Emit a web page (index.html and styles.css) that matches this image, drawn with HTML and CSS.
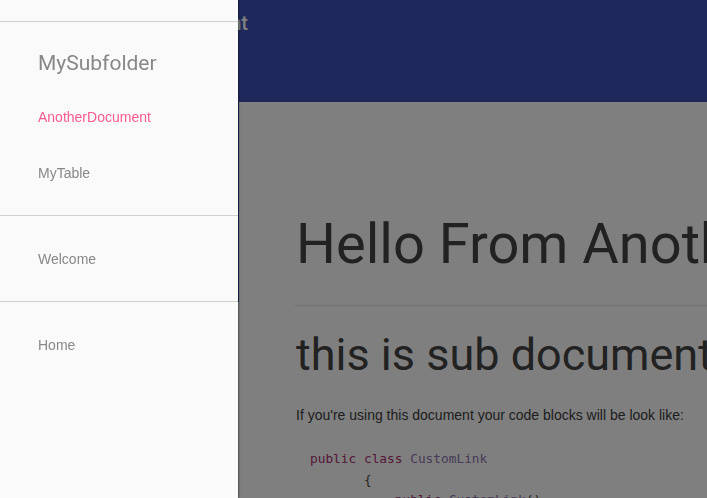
FILE: index.html
```html
<!DOCTYPE html>
<html>
<head>
<meta charset="utf-8">
<link rel="stylesheet" href="styles.css">
</head>
<body>
<div class="page">
  <header class="appbar">
    <div class="title">AnotherDocument</div>
  </header>
  <main class="card">
    <h1 class="h1">Hello From Another Document</h1>
    <hr class="rule">
    <h2 class="h2">this is sub document</h2>
    <p class="para">If you're using this document your code blocks will be look like:</p>
<pre class="code"><span class="kw">public</span> <span class="kw">class</span> <span class="ty">CustomLink</span>
       <span class="pn">{</span>
           <span class="kw">public</span> <span class="ty">CustomLink</span><span class="pn">()</span>
           <span class="pn">{</span>
           <span class="pn">}</span>
       <span class="pn">}</span></pre>
  </main>
</div>
<div class="scrim"></div>
<nav class="drawer">
  <div class="drawer-top"></div>
  <div class="group">
    <div class="subheader">MySubfolder</div>
    <div class="item active">AnotherDocument</div>
    <div class="item">MyTable</div>
  </div>
  <div class="group">
    <div class="item">Welcome</div>
  </div>
  <div class="group">
    <div class="item">Home</div>
  </div>
</nav>
</body>
</html>
```
FILE: styles.css
```css
html, body {
  margin: 0;
  padding: 0;
  height: 100%;
}
body {
  background: #fafafa;
  overflow: hidden;
  font-family: "Liberation Sans", Arial, sans-serif;
}
.page {
  width: 1000px;
}
.appbar {
  background: #3f51b5;
  height: 302px;
  box-sizing: border-box;
  padding: 11px 0 0 85px;
}
.title {
  font-family: Roboto, sans-serif;
  font-weight: 500;
  font-size: 20px;
  line-height: 24px;
  color: #ffffff;
}
.card {
  display: block;
  background: #ffffff;
  margin: -200px 0 0 239px;
  width: 700px;
  box-sizing: border-box;
  padding: 110px 0 0 57px;
  height: 500px;
  box-shadow: 0 1px 3px rgba(0,0,0,0.2);
}
.h1 {
  margin: 0;
  font-family: Roboto, sans-serif;
  font-weight: 400;
  font-size: 56px;
  line-height: 64px;
  color: #444444;
  white-space: nowrap;
}
.rule {
  margin: 29px 0 0 -1px;
  border: 0;
  height: 1px;
  background: #e0e0e0;
}
.h2 {
  margin: 23px 0 0 0;
  font-family: Roboto, sans-serif;
  font-weight: 400;
  font-size: 45px;
  line-height: 52px;
  color: #444444;
  white-space: nowrap;
}
.para {
  margin: 24px 0 0 0;
  font-size: 14px;
  line-height: 20px;
  color: #3c3c3c;
}
.code {
  margin: 24px 0 0 0;
  padding: 0 0 0 14px;
  font-family: "DejaVu Sans Mono", monospace;
  font-size: 12.8px;
  line-height: 20.5px;
  color: #444444;
}
.kw { color: #a8306e; }
.ty { color: #8e76ad; }
.pn { color: #4a4a3a; }
.scrim {
  position: fixed;
  inset: 0;
  background: rgba(0,0,0,0.5);
}
.drawer {
  position: fixed;
  top: 0;
  left: 0;
  bottom: 0;
  width: 238px;
  background: #fafafa;
  box-shadow: 1px 0 2px rgba(0,0,0,0.35);
}
.drawer-top {
  height: 21px;
  border-bottom: 1px solid #d0d0d0;
}
.group {
  padding: 15px 0 14px;
  border-bottom: 1px solid #d0d0d0;
}
.group:last-child {
  border-bottom: 0;
}
.subheader {
  height: 52px;
  line-height: 52px;
  padding-left: 38px;
  font-family: Roboto, sans-serif;
  font-size: 21px;
  color: #888888;
}
.item {
  height: 56px;
  line-height: 56px;
  padding-left: 38px;
  font-size: 14px;
  color: #888888;
}
.item.active {
  color: #ff5a92;
}
```
